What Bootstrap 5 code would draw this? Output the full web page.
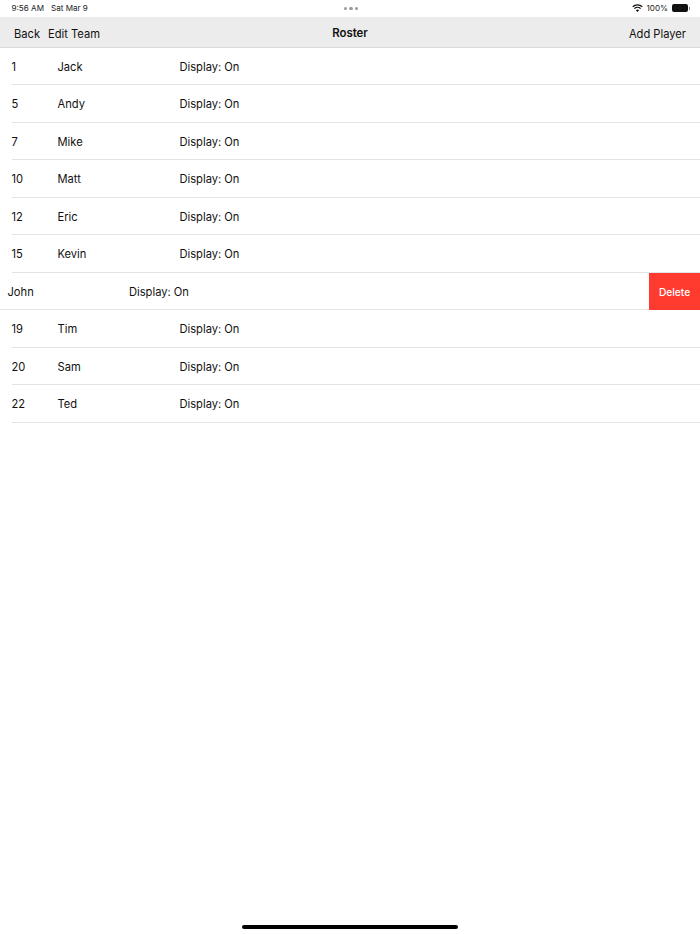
<!DOCTYPE html>
<html lang="en">
<head>
<meta charset="utf-8">
<title>Roster</title>
<link rel="stylesheet" href="https://cdn.jsdelivr.net/npm/bootstrap@5.3.0/dist/css/bootstrap.min.css">
<style>
html,body{height:934px;overflow:hidden;background:#fff}
body{font-family:Inter,"Liberation Sans",sans-serif;color:#111;font-size:11.15px}
.screen{height:934px}
.status-strip{height:17px;font-size:8.1px;padding:0 10px 0 11.5px;color:#222}
.status-strip .s-left,.status-strip .s-right{flex:1 1 0}
.status-date{margin-left:7px}
.dots{gap:2px}
.dots i{display:block;width:3.5px;height:3.5px;border-radius:50%;background:#9a9a9a}
.batt{width:16px;height:8px;background:#111;border-radius:2px;margin-left:4px;flex:none}
.batt-tip{width:1px;height:3px;background:#888;margin-left:1px;flex:none}
.nav-strip{height:30.5px;background:#ececec;border-bottom:1px solid #d9d9d9;padding:4.5px 14px 0;flex:none}
.nav-strip .n-side{flex:1 1 0}
.nav-edit{margin-left:8px}
.nav-title{font-weight:600;font-size:11.4px}
.player-row{height:37.5px;margin-left:11.5px;border-bottom:1px solid #e4e4e4;padding-top:3px;flex:none}
.cell-num{width:46px}
.cell-name{width:122px}
.swiped{margin-left:0;border-bottom:0;padding-top:0}
.swiped-body{border-bottom:1px solid #e4e4e4;padding:3px 0 0 7.5px}
.swiped-name{width:121.5px}
.del-action{width:51px;background:#ff3b30;color:#fff;font-size:10.2px;font-weight:500;padding-top:3px}
.home-bar{width:216px;height:4px;background:#000;border-radius:2px;margin-bottom:5.5px}
</style>
</head>
<body>
<div class="screen d-flex flex-column">
  <div class="status-strip d-flex align-items-center">
    <div class="s-left d-flex"><span>9:56 AM</span><span class="status-date">Sat Mar 9</span></div>
    <div class="dots d-flex"><i></i><i></i><i></i></div>
    <div class="s-right d-flex align-items-center justify-content-end">
      <svg width="11" height="8" viewBox="0 0 22 16" aria-hidden="true"><path d="M11 16l-3.2-3.6a4.6 4.6 0 0 1 6.4 0z" fill="#111"/><path d="M4.8 9.2a8.8 8.8 0 0 1 12.4 0" fill="none" stroke="#111" stroke-width="2.6"/><path d="M1.5 5.6a13.4 13.4 0 0 1 19 0" fill="none" stroke="#111" stroke-width="2.6"/></svg>
      <span class="ms-1">100%</span>
      <span class="batt"></span><span class="batt-tip"></span>
    </div>
  </div>
  <div class="nav-strip d-flex align-items-center">
    <div class="n-side d-flex"><span>Back</span><span class="nav-edit">Edit Team</span></div>
    <div class="nav-title">Roster</div>
    <div class="n-side text-end">Add Player</div>
  </div>
  <div class="player-row d-flex align-items-center"><span class="cell-num">1</span><span class="cell-name">Jack</span><span>Display: On</span></div>
  <div class="player-row d-flex align-items-center"><span class="cell-num">5</span><span class="cell-name">Andy</span><span>Display: On</span></div>
  <div class="player-row d-flex align-items-center"><span class="cell-num">7</span><span class="cell-name">Mike</span><span>Display: On</span></div>
  <div class="player-row d-flex align-items-center"><span class="cell-num">10</span><span class="cell-name">Matt</span><span>Display: On</span></div>
  <div class="player-row d-flex align-items-center"><span class="cell-num">12</span><span class="cell-name">Eric</span><span>Display: On</span></div>
  <div class="player-row d-flex align-items-center"><span class="cell-num">15</span><span class="cell-name">Kevin</span><span>Display: On</span></div>
  <div class="player-row swiped d-flex">
    <div class="swiped-body flex-grow-1 d-flex align-items-center"><span class="swiped-name">John</span><span>Display: On</span></div>
    <div class="del-action d-flex align-items-center justify-content-center">Delete</div>
  </div>
  <div class="player-row d-flex align-items-center"><span class="cell-num">19</span><span class="cell-name">Tim</span><span>Display: On</span></div>
  <div class="player-row d-flex align-items-center"><span class="cell-num">20</span><span class="cell-name">Sam</span><span>Display: On</span></div>
  <div class="player-row d-flex align-items-center"><span class="cell-num">22</span><span class="cell-name">Ted</span><span>Display: On</span></div>
  <div class="home-bar mt-auto mx-auto"></div>
</div>
<script src="https://cdn.jsdelivr.net/npm/bootstrap@5.3.0/dist/js/bootstrap.bundle.min.js"></script>
</body>
</html>
